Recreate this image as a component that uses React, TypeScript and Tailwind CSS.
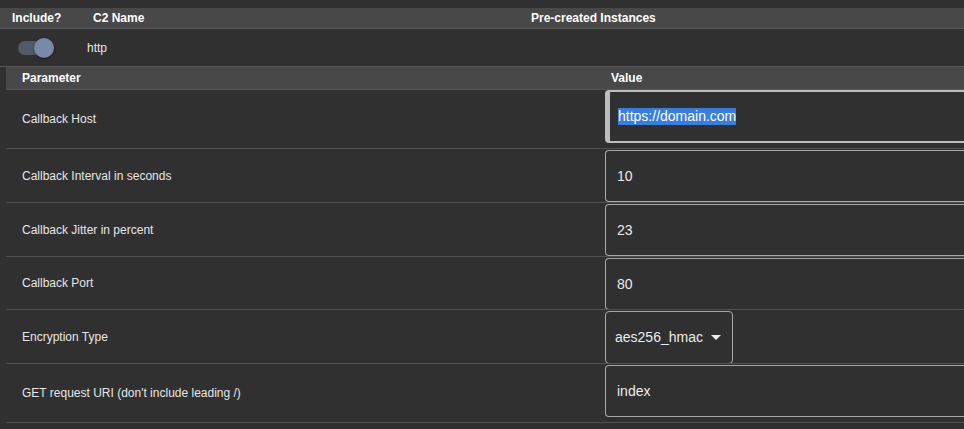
import React from 'react';

type Param = {
  label: string;
  value: string;
  kind: 'focused' | 'text' | 'select';
  rowH: string;
  boxTop: string;
};

const params: Param[] = [
  { label: 'Callback Host', value: 'https://domain.com', kind: 'focused', rowH: 'h-[59px]', boxTop: 'mt-0' },
  { label: 'Callback Interval in seconds', value: '10', kind: 'text', rowH: 'h-[54px]', boxTop: 'mt-[1px]' },
  { label: 'Callback Jitter in percent', value: '23', kind: 'text', rowH: 'h-[54px]', boxTop: 'mt-[1px]' },
  { label: 'Callback Port', value: '80', kind: 'text', rowH: 'h-[53px]', boxTop: 'mt-[1px]' },
  { label: 'Encryption Type', value: 'aes256_hmac', kind: 'select', rowH: 'h-[54px]', boxTop: 'mt-[1px]' },
  { label: "GET request URI (don't include leading /)", value: 'index', kind: 'text', rowH: 'h-[59px]', boxTop: 'mt-[1px]' },
];

function Toggle() {
  // MUI-style switch, checked
  return (
    <div className="relative w-[38px] h-[20px] flex items-center">
      <div className="w-[32px] h-[14px] rounded-full bg-[#535b69]" />
      <div className="absolute left-[16px] top-0 w-[20px] h-[20px] rounded-full bg-[#7a8aa6] shadow-[0_1px_3px_rgba(0,0,0,0.5)]" />
    </div>
  );
}

function ValueBox({ p }: { p: Param }) {
  if (p.kind === 'focused') {
    return (
      <div className={`${p.boxTop} shrink-0 h-[53px] w-[400px] rounded-l-[4px] border-2 border-l-[5px] border-r-0 border-[#bdbdbd] flex items-center pl-[8px]`}>
        <span className="text-[14px] text-white bg-[#3b7ddd] leading-[17px]">{p.value}</span>
      </div>
    );
  }
  if (p.kind === 'select') {
    return (
      <div className={`${p.boxTop} shrink-0 h-[53px] w-[128px] rounded-[4px] border border-[#a8a8a8] flex items-center pl-[9px]`}>
        <span className="text-[14px] text-[#ececec]">{p.value}</span>
        <svg className="ml-[8px]" width="10" height="5" viewBox="0 0 10 5">
          <path d="M0 0 L10 0 L5 5 Z" fill="#ececec" />
        </svg>
      </div>
    );
  }
  return (
    <div className={`${p.boxTop} shrink-0 h-[52px] w-[400px] rounded-l-[4px] border border-r-0 border-[#a8a8a8] flex items-center pl-[11px]`}>
      <span className="text-[14px] text-[#ececec]">{p.value}</span>
    </div>
  );
}

export default function App() {
  return (
    <div className="w-[964px] h-[429px] overflow-hidden bg-[#303030] text-[#e6e6e6] font-['Liberation_Sans',Arial,sans-serif]">
      <div className="h-[8px]" />

      {/* C2 table header */}
      <div className="h-[21px] bg-[#484848] border-b border-[#575757] flex items-center text-[12px] font-bold text-white">
        <div className="w-[93px] pl-[12px]">Include?</div>
        <div className="w-[438px]">C2 Name</div>
        <div>Pre-created Instances</div>
      </div>

      {/* http row */}
      <div className="h-[38px] border-b border-[#575757] flex items-center text-[12px]">
        <div className="w-[87px] pl-[18px]">
          <Toggle />
        </div>
        <div className="text-[#e6e6e6]">http</div>
      </div>

      {/* parameter table */}
      <div className="ml-[6px]">
        <div className="h-[23px] bg-[#484848] border-b border-[#575757] flex items-center text-[12px] font-bold text-white">
          <div className="w-[599px] shrink-0 pl-[16px]">Parameter</div>
          <div className="pl-[6px]">Value</div>
        </div>

        {params.map((p) => (
          <div key={p.label} className={`${p.rowH} border-b border-[#515151] flex`}>
            <div className="w-[599px] shrink-0 pl-[16px] self-center text-[12px] text-[#e6e6e6]">{p.label}</div>
            <div className="flex-1 flex items-start overflow-hidden">
              <ValueBox p={p} />
            </div>
          </div>
        ))}
      </div>
    </div>
  );
}
